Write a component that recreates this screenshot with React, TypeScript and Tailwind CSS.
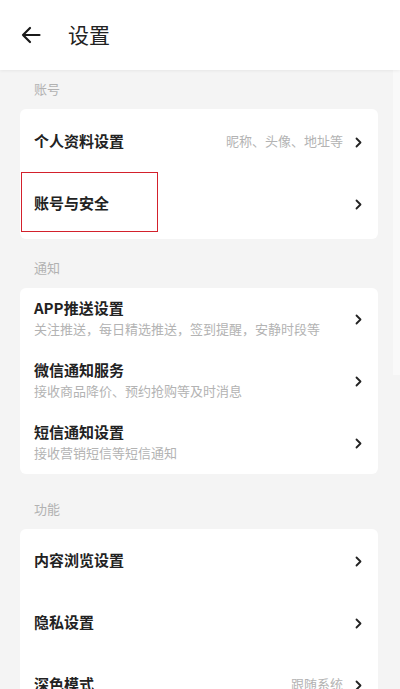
import React from "react";

const font = { fontFamily: '"Noto Sans CJK SC", "Noto Sans", sans-serif' };

function Chevron() {
  return (
    <svg width="7" height="11" viewBox="0 0 7 11" className="shrink-0">
      <path d="M1.5 1.5 L5.5 5.5 L1.5 9.5" fill="none" stroke="#222" strokeWidth="1.8" strokeLinecap="round" strokeLinejoin="round" />
    </svg>
  );
}

function Label({ text, pt }: { text: string; pt: string }) {
  return (
    <div className={`${pt} pb-[11px] pl-[34px] text-[13px] leading-[18px] text-[#b2b2b2]`}>{text}</div>
  );
}

function Row({ title, sub, right, highlight }: { title: string; sub?: string; right?: string; highlight?: boolean }) {
  return (
    <div className="relative flex items-center h-[62px] pl-[14px] pr-[16px]">
      <div className="flex-1 min-w-0 flex flex-col gap-[2px] pb-[3px]">
        <div className="text-[15px] leading-[20px] font-bold text-[#222]">{title}</div>
        {sub && <div className="text-[13px] leading-[17px] text-[#b3b3b3] whitespace-nowrap">{sub}</div>}
      </div>
      {right && <div className="text-[13px] text-[#b3b3b3] mr-[12px] pb-[3px]">{right}</div>}
      <Chevron />
      {highlight && (
        <div className="absolute left-[1px] top-[-1px] w-[137px] h-[60px] border-[1.5px] border-[#d3212c]" />
      )}
    </div>
  );
}

export default function App() {
  return (
    <div style={font} className="relative min-h-screen bg-[#f4f4f4] overflow-hidden">
      <div className="relative z-10 h-[70px] bg-white flex items-center shadow-[0_1px_3px_rgba(0,0,0,0.06)]">
        <svg width="20" height="18" viewBox="0 0 20 18" className="ml-[21px]">
          <path d="M18.5 9 H2 M9 2 L2 9 L9 16" fill="none" stroke="#1a1a1a" strokeWidth="2.2" strokeLinecap="round" strokeLinejoin="round" />
        </svg>
        <div className="ml-[27px] text-[21px] text-[#222] leading-none pb-[2px]">设置</div>
      </div>
      <div className="absolute right-0 top-[65px] w-[7px] h-[310px] bg-[#f9f9f9]" />
      <div className="relative">
        <Label text="账号" pt="pt-[10px]" />
        <div className="ml-[20px] mr-[22px] bg-white rounded-[6px] pt-[2px] pb-[4px]">
          <Row title="个人资料设置" right="昵称、头像、地址等" />
          <Row title="账号与安全" highlight />
        </div>
        <Label text="通知" pt="pt-[20px]" />
        <div className="ml-[20px] mr-[22px] bg-white rounded-[6px]">
          <Row title="APP推送设置" sub="关注推送，每日精选推送，签到提醒，安静时段等" />
          <Row title="微信通知服务" sub="接收商品降价、预约抢购等及时消息" />
          <Row title="短信通知设置" sub="接收营销短信等短信通知" />
        </div>
        <Label text="功能" pt="pt-[26px]" />
        <div className="ml-[20px] mr-[22px] bg-white rounded-[6px] pt-[1px]">
          <Row title="内容浏览设置" />
          <Row title="隐私设置" />
          <Row title="深色模式" right="跟随系统" />
        </div>
      </div>
    </div>
  );
}
